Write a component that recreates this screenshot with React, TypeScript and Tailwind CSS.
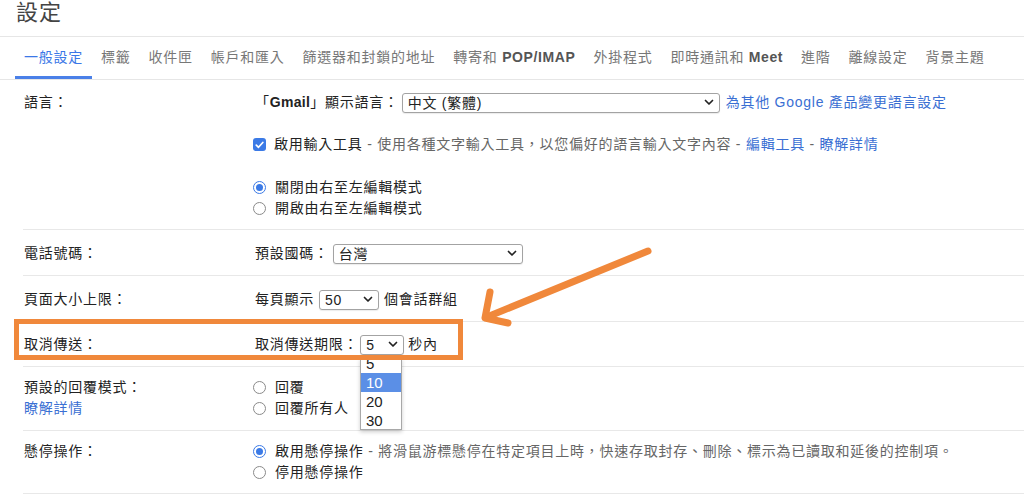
import React from "react";

const FONT = '"Liberation Sans", "Noto Sans CJK TC", sans-serif';

const tabs = [
  { label: "一般設定", active: true },
  { label: "標籤" },
  { label: "收件匣" },
  { label: "帳戶和匯入" },
  { label: "篩選器和封鎖的地址" },
  { label: "轉寄和 ", bold: "POP/IMAP" },
  { label: "外掛程式" },
  { label: "即時通訊和 ", bold: "Meet" },
  { label: "進階" },
  { label: "離線設定" },
  { label: "背景主題" },
];

function Chevron() {
  return (
    <svg width="10" height="7" viewBox="0 0 10 7" className="shrink-0">
      <path d="M1.5 1.5 L5 5 L8.5 1.5" fill="none" stroke="#222" strokeWidth="1.7" strokeLinecap="round" strokeLinejoin="round" />
    </svg>
  );
}

function FakeSelect({ value, width }: { value: string; width: string }) {
  return (
    <div className={`${width} h-[20px] flex items-center justify-between border border-[#a3a3a3] rounded-[3px] bg-white pl-[5px] pr-[5px] shadow-[0_1px_1px_rgba(0,0,0,0.08)]`}>
      <span className="text-[#222] leading-[18px]">{value}</span>
      <Chevron />
    </div>
  );
}

function Radio({ checked }: { checked?: boolean }) {
  return checked ? (
    <span className="w-[13px] h-[13px] rounded-full border border-[#3b7ae6] bg-white flex items-center justify-center shrink-0">
      <span className="block w-[7px] h-[7px] rounded-full bg-[#3b7ae6]" />
    </span>
  ) : (
    <span className="block w-[13px] h-[13px] rounded-full border border-[#8a8a8a] bg-white shrink-0" />
  );
}

function Checkbox() {
  return (
    <span className="w-[13px] h-[13px] rounded-[3px] bg-[#3b7ae6] flex items-center justify-center shrink-0">
      <svg width="9" height="8" viewBox="0 0 9 8">
        <path d="M1.3 4.2 L3.5 6.3 L7.8 1.5" fill="none" stroke="#fff" strokeWidth="1.7" strokeLinecap="round" strokeLinejoin="round" />
      </svg>
    </span>
  );
}

function Row({ label, children, pt, pb, extra }: { label: string; children: React.ReactNode; pt: string; pb: string; extra?: React.ReactNode }) {
  return (
    <div className={`ml-[23px] flex border-b border-[#e8e8e8] ${pt} ${pb}`}>
      <div className="w-[232px] pl-[1px] shrink-0 flex flex-col">
        <div className="h-[21px] leading-[21px] text-[#222]">{label}</div>
        {extra}
      </div>
      <div className="flex flex-col">{children}</div>
    </div>
  );
}

export default function App() {
  return (
    <div
      className="relative w-[1024px] h-[496px] overflow-hidden bg-white text-[14px] tracking-[0.75px]"
      style={{ fontFamily: FONT }}
    >
      {/* Title */}
      <div className="h-[37px] border-b border-[#e6e6e6] pl-[16px] pt-[1px]">
        <h1 className="text-[22px] leading-[24px] text-[#444] tracking-[1px]">設定</h1>
      </div>

      {/* Tabs */}
      <div className="h-[43px] border-b border-[#e6e6e6] flex pl-[15px]">
        {tabs.map((t) => (
          <div
            key={t.label}
            className={`px-[9px] flex items-center h-full pt-[1px] border-b-[3px] ${t.active ? "border-[#4a80e8] text-[#3b78e7]" : "border-transparent text-[#777]"}`}
          >
            <span className="whitespace-pre">{t.label}</span>
            {t.bold && <span className="font-bold text-[#555] tracking-[0.6px]">{t.bold}</span>}
          </div>
        ))}
      </div>

      {/* 語言 */}
      <Row label="語言：" pt="pt-[12px]" pb="pb-[10px]">
        <div className="h-[21px] flex items-center">
          <span className="text-[#222]">「<b className="font-bold tracking-[0.3px]">Gmail</b>」顯示語言：</span>
          <div className="ml-[3px]">
            <FakeSelect value="中文 (繁體)" width="w-[318px]" />
          </div>
          <a className="ml-[6px] text-[#3a6fd3]">為其他 Google 產品變更語言設定</a>
        </div>
        <div className="mt-[21px] h-[21px] flex items-center">
          <span className="ml-[-2px] mr-[8px]"><Checkbox /></span>
          <span className="text-[#222]">啟用輸入工具</span>
          <span className="text-[#666] whitespace-pre"> - 使用各種文字輸入工具，以您偏好的語言輸入文字內容 - </span>
          <a className="text-[#3a6fd3]">編輯工具</a>
          <span className="text-[#666] whitespace-pre"> - </span>
          <a className="text-[#3a6fd3]">瞭解詳情</a>
        </div>
        <div className="mt-[22px] h-[21px] flex items-center">
          <span className="ml-[-2px] mr-[9px]"><Radio checked /></span>
          <span className="text-[#222]">關閉由右至左編輯模式</span>
        </div>
        <div className="h-[21px] flex items-center">
          <span className="ml-[-2px] mr-[9px]"><Radio /></span>
          <span className="text-[#222]">開啟由右至左編輯模式</span>
        </div>
      </Row>

      {/* 電話號碼 */}
      <Row label="電話號碼：" pt="pt-[13px]" pb="pb-[11px]">
        <div className="h-[21px] flex items-center">
          <span className="text-[#222]">預設國碼：</span>
          <div className="ml-[4px]">
            <FakeSelect value="台灣" width="w-[190px]" />
          </div>
        </div>
      </Row>

      {/* 頁面大小上限 */}
      <Row label="頁面大小上限：" pt="pt-[13px]" pb="pb-[11px]">
        <div className="h-[21px] flex items-center">
          <span className="text-[#222]">每頁顯示</span>
          <div className="ml-[5px]">
            <FakeSelect value="50" width="w-[60px]" />
          </div>
          <span className="ml-[5px] text-[#222]">個會話群組</span>
        </div>
      </Row>

      {/* 取消傳送 */}
      <Row label="取消傳送：" pt="pt-[12px]" pb="pb-[11px]">
        <div className="h-[21px] flex items-center">
          <span className="text-[#222]">取消傳送期限：</span>
          <div className="ml-[2px]">
            <FakeSelect value="5" width="w-[44px]" />
          </div>
          <span className="ml-[4px] text-[#222]">秒內</span>
        </div>
      </Row>

      {/* 預設的回覆模式 */}
      <Row
        label="預設的回覆模式："
        pt="pt-[10px]"
        pb="pb-[11px]"
        extra={<a className="h-[21px] leading-[21px] text-[#3a6fd3]">瞭解詳情</a>}
      >
        <div className="h-[21px] flex items-center">
          <span className="ml-[-2px] mr-[9px]"><Radio /></span>
          <span className="text-[#222]">回覆</span>
        </div>
        <div className="h-[21px] flex items-center">
          <span className="ml-[-2px] mr-[9px]"><Radio /></span>
          <span className="text-[#222]">回覆所有人</span>
        </div>
      </Row>

      {/* 懸停操作 */}
      <Row label="懸停操作：" pt="pt-[10px]" pb="pb-[10px]">
        <div className="h-[21px] flex items-center">
          <span className="ml-[-2px] mr-[9px]"><Radio checked /></span>
          <span className="text-[#222]">啟用懸停操作</span>
          <span className="text-[#666] whitespace-pre"> - 將滑鼠游標懸停在特定項目上時，快速存取封存、刪除、標示為已讀取和延後的控制項。</span>
        </div>
        <div className="h-[21px] flex items-center">
          <span className="ml-[-2px] mr-[9px]"><Radio /></span>
          <span className="text-[#222]">停用懸停操作</span>
        </div>
      </Row>

      {/* Open dropdown list for 取消傳送期限 */}
      <div className="absolute left-[360px] top-[358px] w-[42px] h-[72px] overflow-hidden bg-white border border-[#a8a8a8] shadow-[0_2px_4px_rgba(0,0,0,0.2)] text-[15px] tracking-normal">
        <div className="mt-[-5px]">
          {["5", "10", "20", "30"].map((v) => (
            <div
              key={v}
              className={`h-[19px] leading-[19px] pl-[5px] ${v === "10" ? "bg-[#5b8fe6] text-white" : "text-[#222]"}`}
            >
              {v}
            </div>
          ))}
        </div>
      </div>

      {/* Annotation: orange box */}
      <div className="absolute left-[14px] top-[319px] w-[449px] h-[41px] border-[5px] border-[#f0883b]" />

      {/* Annotation: orange arrow */}
      <svg className="absolute left-0 top-0 pointer-events-none" width="1024" height="496">
        <g fill="none" stroke="#f0883b" strokeWidth="7" strokeLinecap="round" strokeLinejoin="round">
          <path d="M648 251 L487 317" />
          <path d="M490 292 L485 318 L508 323" />
        </g>
      </svg>
    </div>
  );
}
